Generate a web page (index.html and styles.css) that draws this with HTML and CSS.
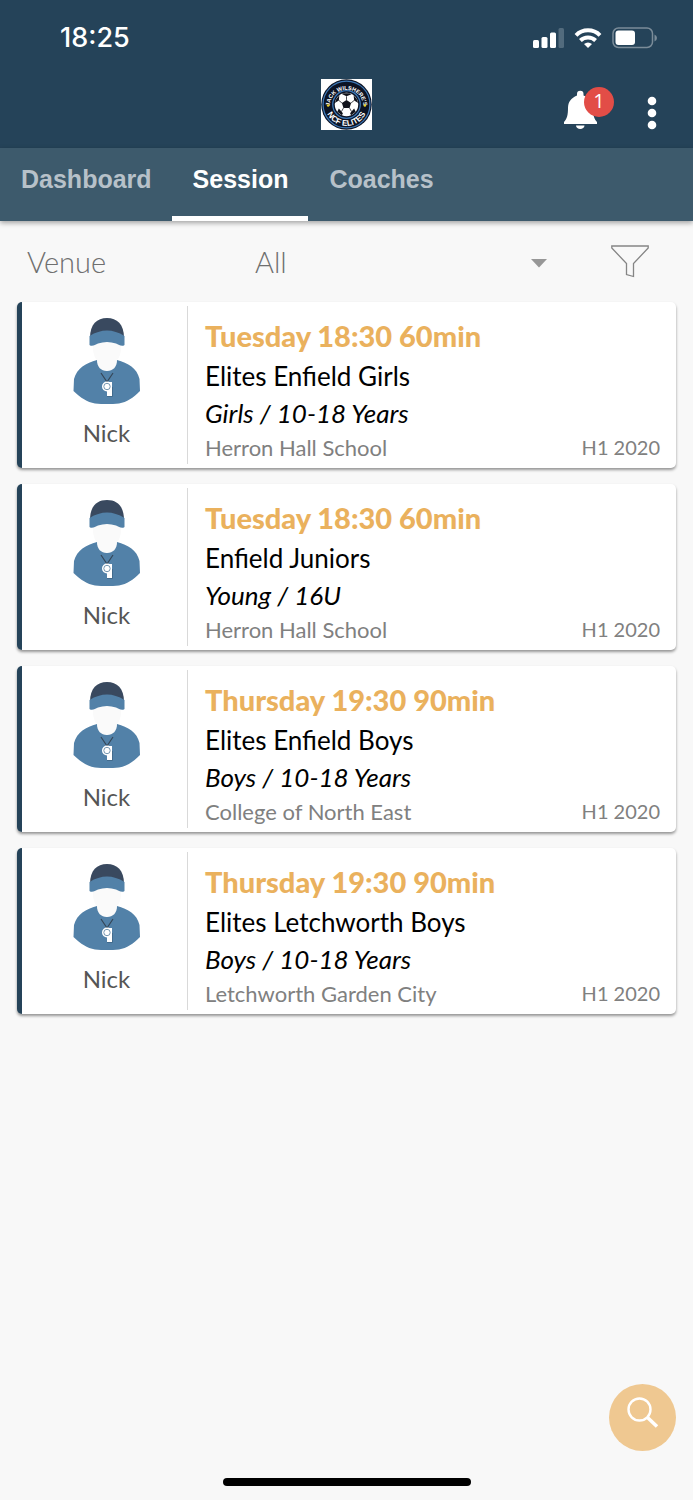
FILE: index.html
```html
<!DOCTYPE html>
<html lang="en">
<head>
<meta charset="utf-8">
<meta name="viewport" content="width=device-width, initial-scale=1">
<title>Sessions</title>
<link rel="stylesheet" href="styles.css">
</head>
<body>
<svg class="defs" width="0" height="0" aria-hidden="true">
  <symbol id="coach" viewBox="0 0 68 88">
    <path d="M20 24H48C49 36 46 42 43 44V53H25V44C22 42 19 36 20 24Z" fill="#fafafa"/>
    <path d="M24 43C13 46 4 51 1 62L.5 74C8 81 14 85 22 86.500Q34 87.500 46 86.500C54 85 60 81 67 74L66.500 62C64 51 55 46 44 43C44 50 40 54 34 54S24 50 24 43Z" fill="#5281a8"/>
    <path d="M17 21C17 7 24 1 34 1S51 7 51 21Z" fill="#39495f"/>
    <path d="M16.500 19Q34 8 51.500 19V28C49 30 46 28 43 26.500Q34 23.500 25 26.500C22 28 19 30 16.500 28Z" fill="#5281a8"/>
    <path d="M28 56L34 65L40 56" fill="none" stroke="#354657" stroke-width="1.200"/>
    <path d="M34 65H39V79H34Z" fill="#fff"/>
    <circle cx="34" cy="69.500" r="5" fill="#fff"/>
    <circle cx="34" cy="69.500" r="3.200" fill="none" stroke="#7898b1" stroke-width="1"/>
    <path d="M39.500 70V79.500H34" fill="none" stroke="#426b8d" stroke-width="1"/>
  </symbol>
</svg>

<header class="top">
  <div class="status">
    <time class="clock">18:25</time>
    <div class="signals">
      <svg width="31" height="20" viewBox="0 0 31 20" role="img" aria-label="Signal">
        <g fill="#fff"><rect y="12" width="6" height="8" rx="1.500"/><rect x="8.500" y="9" width="6" height="11" rx="1.500"/><rect x="17" y="4.500" width="6" height="15.500" rx="1.500"/></g>
        <rect x="25.500" width="5.500" height="20" rx="1.500" fill="#526b7d"/>
      </svg>
      <svg width="28" height="20" viewBox="0 0 28 20" role="img" aria-label="Wi-Fi">
        <g fill="none" stroke="#fff" stroke-width="4"><path d="M2 7.300A17 17 0 0 1 26 7.300"/><path d="M6.400 12.500A11 11 0 0 1 21.600 12.500"/></g>
        <path d="M10 16Q14 12.800 18 16L14 20Z" fill="#fff"/>
      </svg>
      <svg width="45" height="22" viewBox="0 0 45 22" role="img" aria-label="Battery">
        <rect x="1" y="1" width="39.500" height="19.500" rx="5.500" fill="none" stroke="#7b8c99" stroke-width="1.500"/>
        <rect x="3.500" y="3.500" width="19.500" height="14.500" rx="3" fill="#fff"/>
        <path d="M42.500 7.500Q45 8.500 45 11T42.500 14.500Z" fill="#7b8c99"/>
      </svg>
    </div>
  </div>
  <div class="appbar">
    <svg class="logo" viewBox="0 0 100 100" role="img" aria-label="Jack Wilshere's NCF Elites">
      <defs>
        <path id="arc-top" d="M17 54A33 33 0 1 1 83 54"/>
        <path id="arc-bottom" d="M8 50A42 42 0 0 0 92 50"/>
      </defs>
      <rect width="100" height="100" fill="#fff"/>
      <circle cx="50" cy="50" r="49.500" fill="#0c1324"/>
      <circle cx="50" cy="50" r="46" fill="none" stroke="#3d77b5" stroke-width="2.500"/>
      <circle cx="50" cy="50" r="27" fill="none" stroke="#3d77b5" stroke-width="2.500"/>
      <circle cx="50" cy="50" r="23" fill="#fff"/>
      <g fill="#11131c"><path d="M50 41L59 47L56 57H44L41 47ZM40 29L50 34L60 30L56 28H44ZM27 47L35 42L36 32L30 39ZM73 47L65 42L64 32L70 39ZM32 64L35 58L43 67L41 71ZM68 64L65 58L57 67L59 71Z"/></g>
      <g stroke="#11131c" stroke-width="1.500"><path d="M50 41V34M41 47L35 42M59 47L65 42M44 57L40 64M56 57L60 64"/></g>
      <text class="logo-top"><textPath href="#arc-top" startOffset="50%">JACK WILSHERE’S</textPath></text>
      <text class="logo-bottom"><textPath href="#arc-bottom" startOffset="50%">NCF ELITES</textPath></text>
      <circle cx="14" cy="52" r="2.500" fill="#e8cf25"/><circle cx="86" cy="52" r="2.500" fill="#e8cf25"/>
    </svg>
    <div class="actions">
      <button class="bell" type="button" aria-label="Notifications, 1 unread">
        <svg width="34" height="40" viewBox="0 0 34 40" aria-hidden="true"><path d="M13 5.500V4A3.200 3.200 0 0 1 19.500 4V5.500C26 8 29 12 29 18C29 25 30 29 33 32V34H0V32C3 29 4 25 4 18C4 12 7 8 13 5.500ZM12 35.500H20.500C20.500 40 12 40 12 35.500Z" fill="#fff"/></svg>
        <span class="badge">1</span>
      </button>
      <button class="more" type="button" aria-label="More options">
        <svg width="10" height="34" viewBox="0 0 10 34" aria-hidden="true"><g fill="#fff"><circle cx="5" cy="5" r="4.300"/><circle cx="5" cy="17" r="4.300"/><circle cx="5" cy="29" r="4.300"/></g></svg>
      </button>
    </div>
  </div>
  <nav class="tabs">
    <a href="#dashboard">Dashboard</a>
    <a class="active" href="#session" aria-current="page">Session</a>
    <a href="#coaches">Coaches</a>
  </nav>
</header>

<main>
  <form class="filters">
    <label for="venue">Venue</label>
    <div class="picker">
      <select id="venue"><option>All</option></select>
      <svg class="caret" width="16" height="9" viewBox="0 0 16 9" aria-hidden="true"><path d="M0 0H16L8 8.500Z" fill="#979797"/></svg>
    </div>
    <button class="filter" type="button" aria-label="Filter">
      <svg width="38" height="33" viewBox="0 0 38 33" aria-hidden="true"><path d="M.800 1H37.200V3L22.500 18.500V31.500L15.500 29.500V18.500L.800 3Z" fill="none" stroke="#858585" stroke-width="1.300"/></svg>
    </button>
  </form>

  <section class="cards" aria-label="Sessions">
    <article class="card">
      <div class="coach"><svg width="68" height="88" aria-hidden="true"><use href="#coach"/></svg><span>Nick</span></div>
      <div class="details"><h2>Tuesday 18:30 60min</h2><p class="name">Elites Enfield Girls</p><p class="group">Girls / 10-18 Years</p><div class="foot"><span class="place">Herron Hall School</span><span class="term">H1 2020</span></div></div>
    </article>
    <article class="card">
      <div class="coach"><svg width="68" height="88" aria-hidden="true"><use href="#coach"/></svg><span>Nick</span></div>
      <div class="details"><h2>Tuesday 18:30 60min</h2><p class="name">Enfield Juniors</p><p class="group">Young / 16U</p><div class="foot"><span class="place">Herron Hall School</span><span class="term">H1 2020</span></div></div>
    </article>
    <article class="card">
      <div class="coach"><svg width="68" height="88" aria-hidden="true"><use href="#coach"/></svg><span>Nick</span></div>
      <div class="details"><h2>Thursday 19:30 90min</h2><p class="name">Elites Enfield Boys</p><p class="group">Boys / 10-18 Years</p><div class="foot"><span class="place">College of North East</span><span class="term">H1 2020</span></div></div>
    </article>
    <article class="card">
      <div class="coach"><svg width="68" height="88" aria-hidden="true"><use href="#coach"/></svg><span>Nick</span></div>
      <div class="details"><h2>Thursday 19:30 90min</h2><p class="name">Elites Letchworth Boys</p><p class="group">Boys / 10-18 Years</p><div class="foot"><span class="place">Letchworth Garden City</span><span class="term">H1 2020</span></div></div>
    </article>
  </section>
</main>

<button class="search" type="button" aria-label="Search">
  <svg width="32" height="32" viewBox="0 0 32 32" aria-hidden="true"><g fill="none" stroke="#fff"><circle cx="12.500" cy="12.500" r="11" stroke-width="2.400"/><path d="M20.500 20.500L30 29.500" stroke-width="3.500"/></g></svg>
</button>
<div class="home-bar"></div>
</body>
</html>
```
FILE: styles.css
```css
* { box-sizing: border-box; }
body {
  margin: 0;
  min-height: 100vh;
  background: #f8f8f8;
  color: #000;
  font-family: Lato, "Liberation Sans", sans-serif;
}
button { padding: 0; border: 0; background: none; font: inherit; }
svg { display: block; }
.defs { position: absolute; }

.top { background: #254359; color: #fff; }
.status {
  display: flex;
  align-items: center;
  justify-content: space-between;
  height: 76px;
  padding: 0 36px 0 60px;
}
.clock { font: 500 27px/32px Inter, sans-serif; }
.signals { display: flex; align-items: center; gap: 10px; }

.appbar {
  display: grid;
  grid-template-columns: 1fr auto 1fr;
  align-items: start;
  height: 72px;
  padding: 3px 36px 0;
}
.logo { grid-column: 2; width: 51px; height: 51px; }
.logo text { font-family: "Liberation Sans", sans-serif; font-weight: 700; fill: #fff; text-anchor: middle; }
.logo .logo-top { font-size: 11px; }
.logo .logo-bottom { font-size: 16px; }
.actions { display: flex; justify-content: flex-end; align-items: flex-end; gap: 32px; padding-top: 11px; }
.bell { position: relative; width: 51px; }
.badge {
  position: absolute;
  top: -3px;
  right: 1px;
  width: 30px;
  height: 30px;
  border-radius: 50%;
  background: #e24d47;
  color: #fff;
  font: 400 20px/28px "Open Sans", sans-serif;
  text-align: center;
}

.tabs {
  display: flex;
  height: 73px;
  background: #3d5a6c;
  box-shadow: 0 2px 5px rgba(0, 0, 0, .35);
}
.tabs a {
  padding: 14px 20px 0 21px;
  border-bottom: 5px solid transparent;
  color: #b7c1c9;
  font: 700 25px/34px "Liberation Sans", sans-serif;
  text-decoration: none;
}
.tabs .active { border-color: #fff; color: #fff; }

.filters {
  display: grid;
  grid-template-columns: 228px 1fr auto;
  align-items: center;
  height: 81px;
  padding: 0 44px 0 27px;
  color: #6f6f6f;
  font-size: 29px;
  font-weight: 300;
}
.picker { position: relative; margin-right: 64px; }
.picker select {
  width: 100%;
  height: 40px;
  padding: 0;
  border: 0;
  appearance: none;
  background: none;
  color: inherit;
  font: inherit;
}
.caret { position: absolute; top: 17px; right: 0; pointer-events: none; }

.cards { display: grid; gap: 16px; padding: 0 17px; }
.card {
  display: flex;
  min-height: 166px;
  padding: 4px 0;
  border-left: 5px solid #254359;
  border-radius: 5px;
  background: #fff;
  box-shadow: 0 2px 3px rgba(0, 0, 0, .4);
}
.coach {
  display: flex;
  flex-direction: column;
  align-items: center;
  gap: 14px;
  width: 166px;
  padding: 11px 0 0 4px;
  border-right: 1px solid #d9d9d9;
  color: #555;
  font-size: 24px;
  line-height: 28px;
}
.details { flex: 1; padding: 8px 16px 0 17px; }
.details h2, .details p { margin: 0; }
.details h2 { color: #eab15d; font-size: 29px; font-weight: 900; line-height: 44px; }
.name, .group { font-size: 26px; line-height: 37px; }
.group { font-style: italic; }
.foot { display: flex; justify-content: space-between; color: #808080; font-size: 22px; line-height: 32px; }
.term { font-size: 20px; line-height: 30px; }

.search {
  position: fixed;
  right: 17px;
  bottom: 49px;
  display: flex;
  justify-content: center;
  width: 67px;
  height: 67px;
  padding-top: 13px;
  border-radius: 50%;
  background: #efc891;
}
.home-bar {
  position: fixed;
  bottom: 14px;
  left: 50%;
  width: 248px;
  height: 8px;
  margin-left: -124px;
  border-radius: 4px;
  background: #000;
}
```
